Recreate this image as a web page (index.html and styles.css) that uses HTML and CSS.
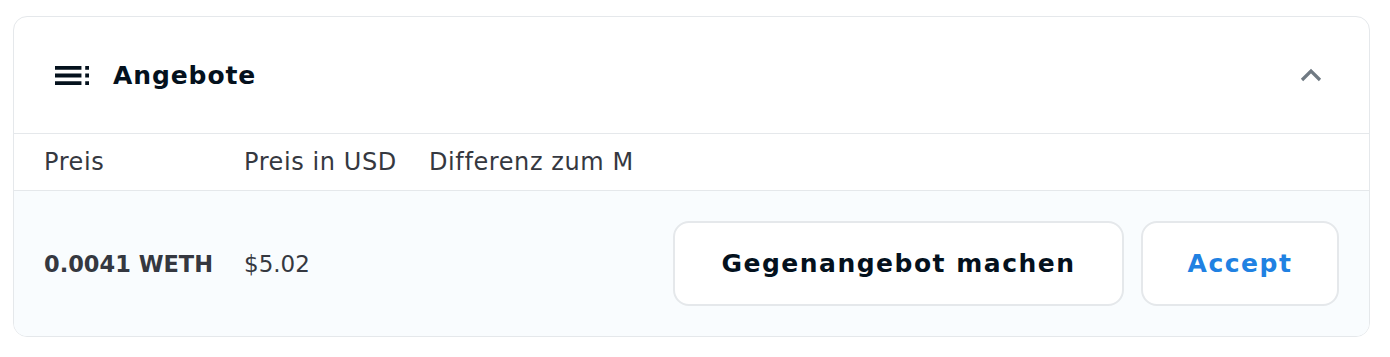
FILE: index.html
```html
<!DOCTYPE html>
<html>
<head>
  <title>Angebote</title>
  <link rel="stylesheet" href="styles.css">
</head>
<body>
  <div class="panel">
    <div class="panel-header">
      <div class="panel-title">
        <svg class="toc-icon" viewBox="3 7 18 10" width="34" height="19">
          <path d="M3 9h14V7H3v2zm0 4h14v-2H3v2zm0 4h14v-2H3v2zm16 0h2v-2h-2v2zm0-10v2h2V7h-2zm0 6h2v-2h-2v2z" fill="#04111d"/>
        </svg>
        <span>Angebote</span>
      </div>
      <svg class="chevron" viewBox="0 0 24 14" width="24" height="14">
        <path d="M3 12l9-9 9 9" fill="none" stroke="#707a83" stroke-width="3.2"/>
      </svg>
    </div>

    <div class="table">
      <div class="table-head">
        <div class="col col-price">Preis</div>
        <div class="col col-usd">Preis in USD</div>
        <div class="col col-diff">Differenz zum Mindestpreis</div>
      </div>
      <div class="table-row">
        <div class="col col-price strong">0.0041 WETH</div>
        <div class="col col-usd">$5.02</div>
        <div class="actions">
          <button class="btn btn-counter">Gegenangebot machen</button>
          <button class="btn btn-accept">Accept</button>
        </div>
      </div>
    </div>
  </div>
</body>
</html>
```

FILE: styles.css
```css
body {
  margin: 0;
  padding: 16px 20px 0 13px;
  font-family: "DejaVu Sans", "Inter", sans-serif;
  background-color: #fff;
  color: #353840;
}

.panel {
  border: 1px solid #e5e8eb;
  border-radius: 14px;
  overflow: hidden;
}

.panel-header {
  display: flex;
  justify-content: space-between;
  align-items: center;
  height: 116px;
  padding: 0 46px 0 41px;
  border-bottom: 1px solid #e5e8eb;
}

.panel-title {
  display: flex;
  align-items: center;
  gap: 24px;
  font-size: 25px;
  font-weight: 700;
  letter-spacing: 0.9px;
  color: #04111d;
}

.table-head {
  display: flex;
  align-items: center;
  height: 56px;
  padding-left: 30px;
  border-bottom: 1px solid #e5e8eb;
  font-size: 24px;
  letter-spacing: 0.6px;
}

.table-row {
  display: flex;
  align-items: center;
  height: 145px;
  padding: 0 30px;
  background-color: #f9fcfe;
  font-size: 23px;
}

.col {
  white-space: nowrap;
  overflow: hidden;
}

.col-price {
  width: 200px;
}

.col-usd {
  width: 185px;
}

.col-diff {
  width: 204px;
}

.strong {
  font-weight: 700;
  font-size: 22.5px;
}

.actions {
  display: flex;
  gap: 17px;
  margin-left: auto;
}

.btn {
  height: 85px;
  border: 2px solid #e5e8eb;
  border-radius: 16px;
  background-color: #fff;
  font-family: inherit;
  font-size: 25px;
  font-weight: 700;
  letter-spacing: 1.5px;
  color: #04111d;
  cursor: pointer;
}

.btn-counter {
  width: 451px;
}

.btn-accept {
  width: 198px;
  color: #2081e2;
}
```
